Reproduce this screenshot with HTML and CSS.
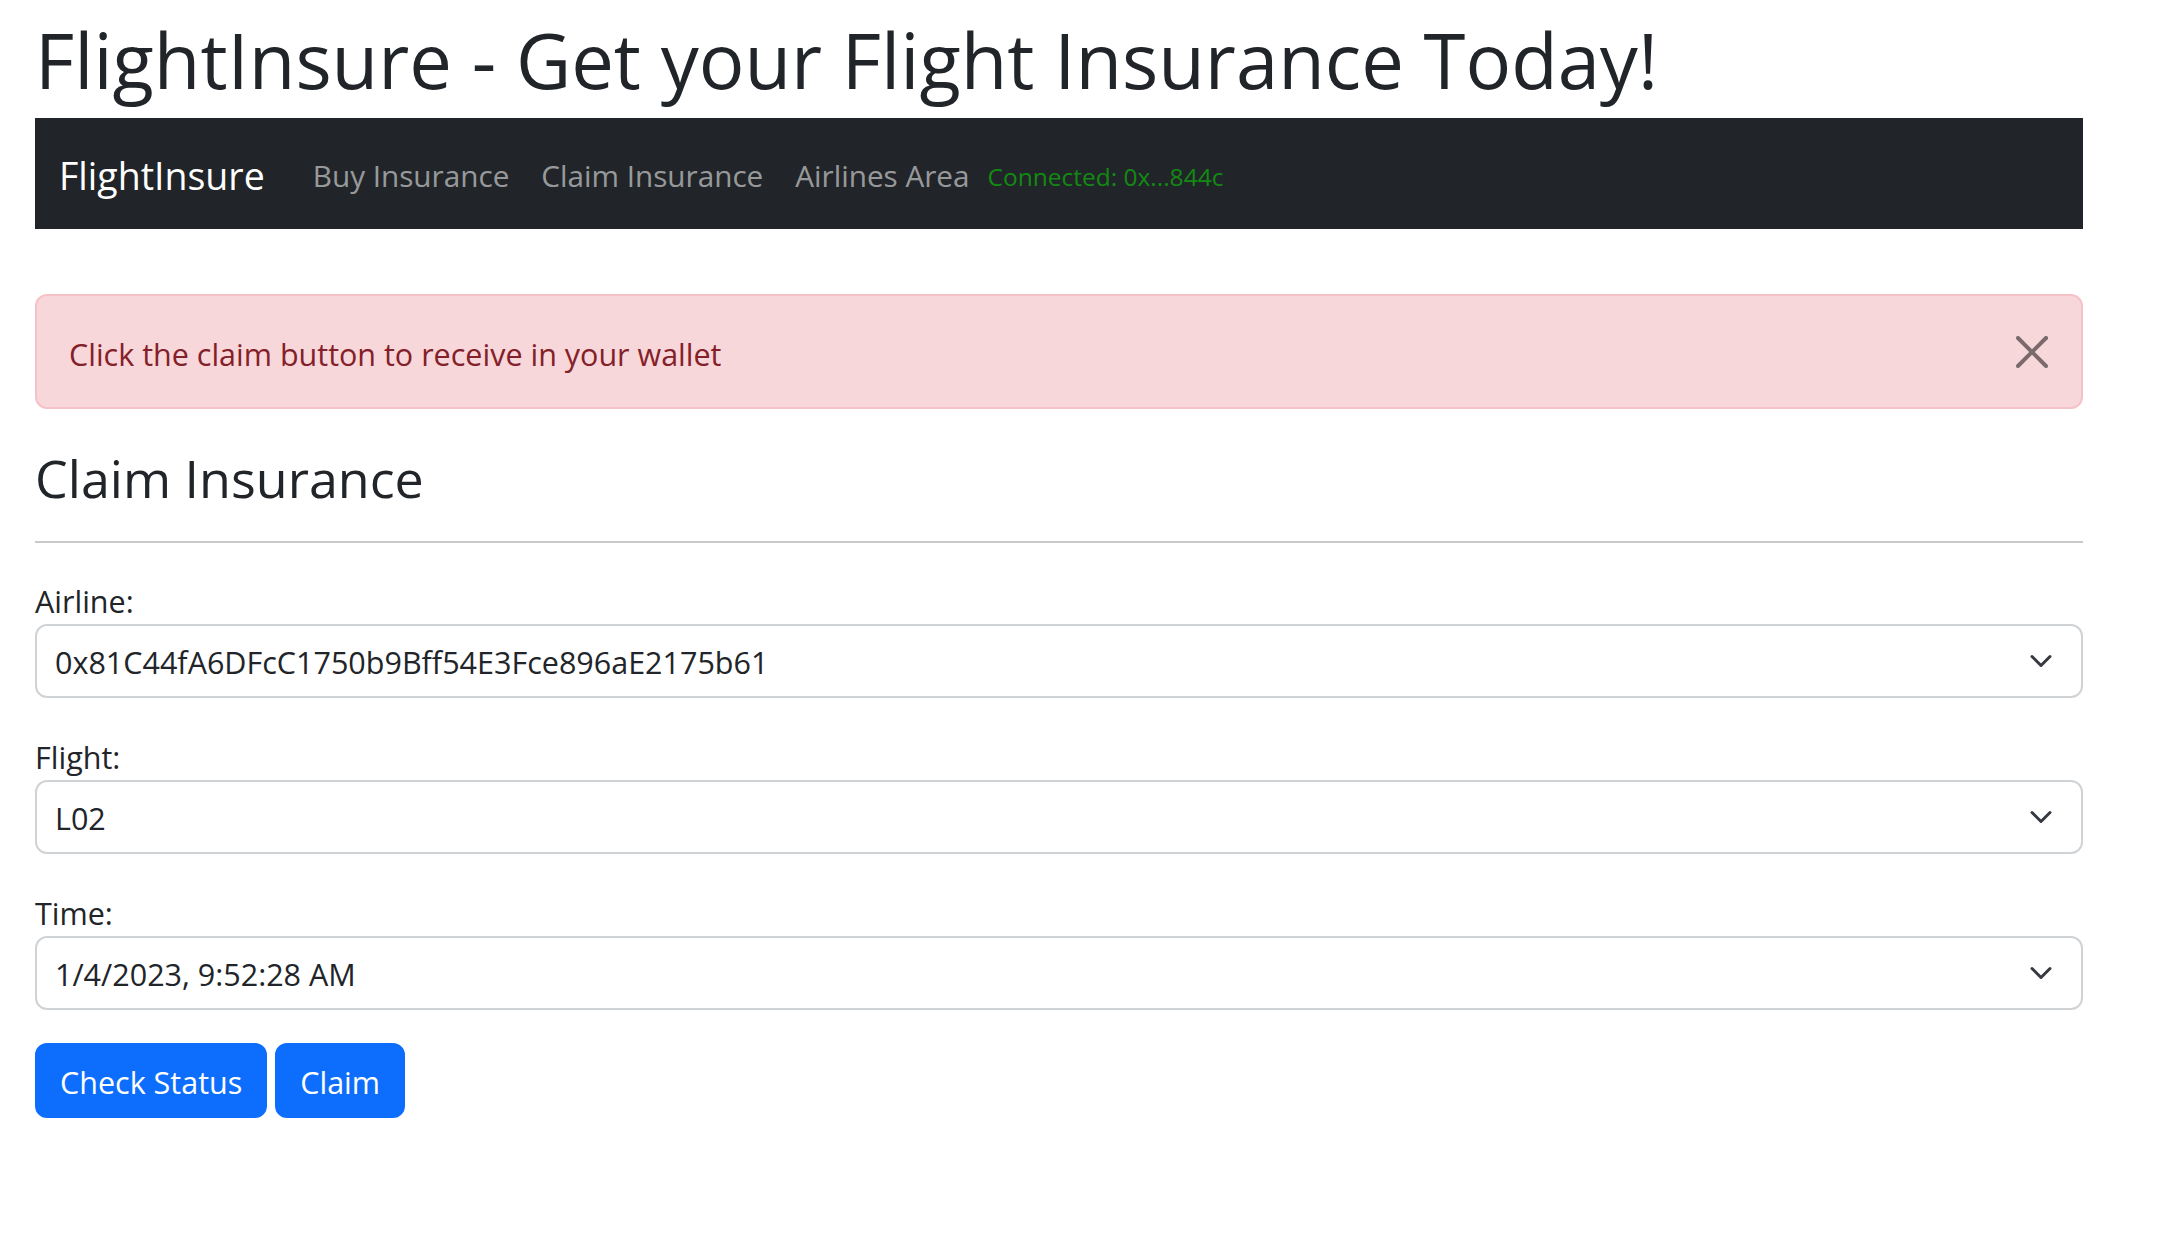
FILE: index.html
```html
<!DOCTYPE html>
<html lang="en">
<head>
<meta charset="utf-8">
<title>FlightInsure</title>
<link rel="stylesheet" href="styles.css">
</head>
<body>
<div class="page">
  <h1 class="title">FlightInsure - Get your Flight Insurance Today!</h1>
  <nav class="navbar">
    <a class="brand" href="#">FlightInsure</a>
    <ul class="nav-links">
      <li><a href="#">Buy Insurance</a></li>
      <li><a href="#">Claim Insurance</a></li>
      <li><a href="#">Airlines Area</a></li>
    </ul>
    <span class="connected">Connected: 0x...844c</span>
  </nav>

  <div class="alert">
    <span class="alert-text">Click the claim button to receive in your wallet</span>
    <button class="btn-close" type="button" aria-label="Close">
      <svg viewBox="0 0 16 16" width="32" height="32"><path d="M.293.293a1 1 0 0 1 1.414 0L8 6.586 14.293.293a1 1 0 1 1 1.414 1.414L9.414 8l6.293 6.293a1 1 0 0 1-1.414 1.414L8 9.414l-6.293 6.293a1 1 0 0 1-1.414-1.414L6.586 8 .293 1.707a1 1 0 0 1 0-1.414z"/></svg>
    </button>
  </div>

  <h3 class="section-title">Claim Insurance</h3>
  <hr class="divider">

  <form class="claim-form">
    <div class="field">
      <label class="field-label" for="airline">Airline:</label>
      <div class="select-wrap">
        <select id="airline" class="form-select"><option>0x81C44fA6DFcC1750b9Bff54E3Fce896aE2175b61</option></select>
        <svg class="chevron" viewBox="0 0 22 13" width="22" height="13"><polyline points="2,2 11,11 20,2"/></svg>
      </div>
    </div>
    <div class="field">
      <label class="field-label" for="flight">Flight:</label>
      <div class="select-wrap">
        <select id="flight" class="form-select"><option>L02</option></select>
        <svg class="chevron" viewBox="0 0 22 13" width="22" height="13"><polyline points="2,2 11,11 20,2"/></svg>
      </div>
    </div>
    <div class="field">
      <label class="field-label" for="time">Time:</label>
      <div class="select-wrap">
        <select id="time" class="form-select"><option>1/4/2023, 9:52:28 AM</option></select>
        <svg class="chevron" viewBox="0 0 22 13" width="22" height="13"><polyline points="2,2 11,11 20,2"/></svg>
      </div>
    </div>
    <div class="actions">
      <button type="button" class="btn">Check Status</button>
      <button type="button" class="btn">Claim</button>
    </div>
  </form>
</div>
</body>
</html>
```

FILE: styles.css
```css
* { box-sizing: border-box; }

body {
  margin: 0;
  background: #fff;
  color: #212529;
  font-family: "Open Sans", "Noto Sans", sans-serif;
}

.page {
  width: 2048px;
  margin-left: 35px;
  padding-top: 12px;
}

.title {
  margin: 0 0 10px;
  font-size: 76px;
  font-weight: 400;
  line-height: 96px;
}

.navbar {
  display: flex;
  align-items: center;
  height: 111px;
  padding: 6px 24px 0;
  background: #212529;
}

.brand {
  margin-right: 32px;
  color: #fff;
  font-size: 37.5px;
  line-height: 1.5;
  text-decoration: none;
}

.nav-links {
  display: flex;
  margin: 0;
  padding: 0;
  list-style: none;
}

.nav-links a {
  display: block;
  padding: 0 16px;
  color: rgba(255, 255, 255, 0.55);
  font-size: 29.7px;
  line-height: 1.5;
  text-decoration: none;
}

.connected {
  margin-left: 2px;
  color: #128a12;
  font-size: 24.5px;
}

.alert {
  display: flex;
  align-items: center;
  justify-content: space-between;
  height: 115px;
  margin-top: 65px;
  padding: 5px 33px 0 32px;
  border: 2px solid #f5c2c7;
  border-radius: 12px;
  background: #f8d7da;
  color: #842029;
  font-size: 30.5px;
}

.btn-close {
  display: flex;
  margin-top: -5px;
  padding: 0;
  border: 0;
  background: transparent;
  opacity: 0.5;
  cursor: pointer;
}

.btn-close svg { fill: #000; }

.section-title {
  margin: 36px 0 0;
  font-size: 52px;
  font-weight: 400;
  line-height: 66px;
}

.divider {
  margin: 30px 0 0;
  border: 0;
  border-top: 2px solid #c8c9ca;
}

.claim-form {
  margin-top: 35px;
}

.field + .field {
  margin-top: 36px;
}

.field-label {
  display: block;
  font-size: 30.5px;
  line-height: 46px;
}

.select-wrap {
  position: relative;
}

.form-select {
  display: block;
  width: 100%;
  height: 74px;
  padding: 2px 60px 0 18px;
  border: 2px solid #d0d3d6;
  border-radius: 12px;
  background: #fff;
  color: #212529;
  font-family: inherit;
  font-size: 30.5px;
  appearance: none;
  -webkit-appearance: none;
}

.chevron {
  position: absolute;
  right: 31px;
  top: 50%;
  transform: translateY(-50%);
  fill: none;
  stroke: #343a40;
  stroke-width: 3;
  stroke-linecap: round;
  stroke-linejoin: round;
  pointer-events: none;
}

.actions {
  display: flex;
  gap: 8px;
  margin-top: 33px;
}

.btn {
  height: 75px;
  padding: 2px 23px 0;
  border: 2px solid #0d6efd;
  border-radius: 12px;
  background: #0d6efd;
  color: #fff;
  font-family: inherit;
  font-size: 30.5px;
  cursor: pointer;
}
```
